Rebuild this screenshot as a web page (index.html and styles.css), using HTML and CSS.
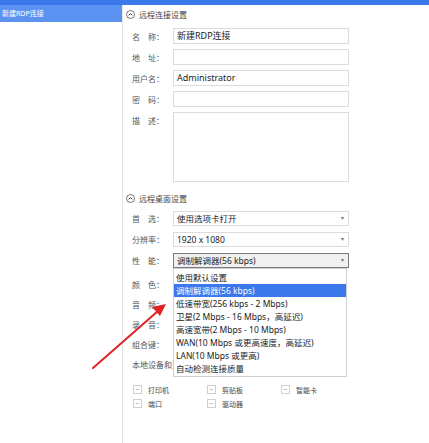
FILE: index.html
```html
<!DOCTYPE html>
<html lang="zh-CN">
<head>
    <meta charset="UTF-8">
    <title>新建RDP连接</title>
    <link rel="stylesheet" href="styles.css">
</head>
<body>
    <div class="topbar"></div>
    <div class="layout">
        <div class="sidebar">
            <div class="side-item active">新建RDP连接</div>
        </div>

        <div class="main">
            <div class="section-head">
                <span class="toggle"><svg width="9" height="9" viewBox="0 0 9 9"><circle cx="4.5" cy="4.5" r="4" fill="none" stroke="#555" stroke-width="0.8"/><path d="M2.8 5.3 L4.5 3.5 L6.2 5.3" fill="none" stroke="#444" stroke-width="1"/></svg></span>
                远程连接设置
            </div>
            <div class="rows first">
                <div class="row"><label>名　称：</label><div class="field">新建RDP连接</div></div>
                <div class="row"><label>地　址：</label><div class="field"></div></div>
                <div class="row"><label>用户名：</label><div class="field">Administrator</div></div>
                <div class="row"><label>密　码：</label><div class="field"></div></div>
                <div class="row tall"><label>描　述：</label><div class="field area"></div></div>
            </div>

            <div class="section-head second">
                <span class="toggle"><svg width="9" height="9" viewBox="0 0 9 9"><circle cx="4.5" cy="4.5" r="4" fill="none" stroke="#555" stroke-width="0.8"/><path d="M2.8 5.3 L4.5 3.5 L6.2 5.3" fill="none" stroke="#444" stroke-width="1"/></svg></span>
                远程桌面设置
            </div>
            <div class="rows selects">
                <div class="row"><label>首　选：</label><div class="field select">使用选项卡打开<span class="caret">▾</span></div></div>
                <div class="row"><label>分辨率：</label><div class="field select">1920 x 1080<span class="caret">▾</span></div></div>
                <div class="row"><label>性　能：</label>
                    <div class="field select focused">调制解调器(56 kbps)<span class="caret">▾</span>
                        <ul class="dropdown">
                            <li>使用默认设置</li>
                            <li class="hl">调制解调器(56 kbps)</li>
                            <li>低速带宽(256 kbps - 2 Mbps)</li>
                            <li>卫星(2 Mbps - 16 Mbps，高延迟)</li>
                            <li>高速宽带(2 Mbps - 10 Mbps)</li>
                            <li>WAN(10 Mbps 或更高速度，高延迟)</li>
                            <li>LAN(10 Mbps 或更高)</li>
                            <li>自动检测连接质量</li>
                        </ul>
                    </div>
                </div>
            </div>
            <div class="rows hidden-rows">
                <div class="row"><label>颜　色：</label></div>
                <div class="row"><label>音　频：</label></div>
                <div class="row"><label>录　音：</label></div>
                <div class="row"><label>组合键：</label></div>
                <div class="row"><label class="clip">本地设备和资源：</label></div>
            </div>
            <div class="checks">
                <div class="check"><span class="box">−</span>打印机</div>
                <div class="check"><span class="box">−</span>剪贴板</div>
                <div class="check"><span class="box">−</span>智能卡</div>
                <div class="check"><span class="box">−</span>端口</div>
                <div class="check"><span class="box">−</span>驱动器</div>
            </div>
        </div>
    </div>

    <svg class="arrow" width="429" height="443" viewBox="0 0 429 443">
        <line x1="93" y1="368" x2="158" y2="311" stroke="#e02424" stroke-width="2" stroke-linecap="round"/>
        <polygon points="166,304 152,307 160,316" fill="#e02424"/>
    </svg>
</body>
</html>
```

FILE: styles.css
```css
/* General */
body {
    margin: 0;
    width: 429px;
    height: 443px;
    overflow: hidden;
    background-color: #ffffff;
    font-family: "Noto Sans", "Noto Sans CJK SC", sans-serif;
    color: #333;
    position: relative;
}

.topbar {
    height: 5px;
    background-color: #3a78ec;
}

.layout {
    display: flex;
    height: 438px;
}

/* Sidebar */
.sidebar {
    width: 122px;
    border-right: 1px solid #e4e4e4;
}

.side-item {
    height: 17px;
    line-height: 17px;
    padding-left: 2px;
    font-size: 7px;
    color: #fff;
}

.side-item.active {
    background-color: #5b93f3;
}

/* Main */
.main {
    flex: 1;
    padding: 2px 0 0 3px;
}

.section-head {
    height: 14px;
    display: flex;
    align-items: center;
    gap: 4px;
    font-size: 8px;
    color: #444;
}

.toggle {
    display: flex;
}

.section-head.second {
    margin-top: 9px;
}

.rows {
    padding-left: 6px;
}

.rows.first {
    margin-top: 7px;
}

.row {
    display: flex;
    align-items: center;
    height: 16px;
    margin-bottom: 5px;
}

.row.tall {
    height: 70px;
    align-items: flex-start;
}

.row label {
    width: 41px;
    font-size: 8px;
    color: #555;
    white-space: nowrap;
}

.row label.clip {
    overflow: hidden;
}

.row.tall label {
    padding-top: 3px;
}

.field {
    width: 171px;
    height: 14px;
    border: 1px solid #dcdcdc;
    font-size: 9px;
    line-height: 14px;
    padding-left: 3px;
    color: #222;
}

.field.area {
    height: 68px;
}

/* Selects */
.rows.selects {
    margin-top: 6px;
}

.rows.selects .row {
    height: 15px;
    margin-bottom: 6px;
}

.field.select {
    height: 13px;
    line-height: 13px;
    font-size: 8.5px;
    position: relative;
}

.caret {
    position: absolute;
    right: 4px;
    top: 0;
    font-size: 6px;
    color: #777;
}

.field.focused {
    border-color: #7a7a7a;
    background-color: #f0f0f0;
}

.dropdown {
    position: absolute;
    left: -1px;
    top: 14px;
    width: 172px;
    margin: 0;
    padding: 2px 0 1px;
    list-style: none;
    background-color: #fff;
    border: 1px solid #cfcfcf;
    z-index: 2;
}

.dropdown li {
    height: 13px;
    line-height: 13px;
    padding-left: 2px;
    font-size: 8.5px;
    color: #222;
    white-space: nowrap;
}

.dropdown li.hl {
    background-color: #3a78ec;
    color: #fff;
}

/* Rows under the open dropdown */
.rows.hidden-rows .row {
    height: 20px;
    margin-bottom: 0;
}

/* Checkboxes */
.checks {
    display: grid;
    grid-template-columns: 74px 74px 74px;
    row-gap: 5px;
    padding-left: 7px;
    margin-top: 11px;
}

.check {
    display: flex;
    align-items: center;
    gap: 6px;
    font-size: 7px;
    color: #444;
    height: 9px;
}

.box {
    width: 7px;
    height: 7px;
    border: 1px solid #cfcfcf;
    font-size: 7px;
    line-height: 7px;
    text-align: center;
    color: #888;
}

/* Annotation arrow */
.arrow {
    position: absolute;
    left: 0;
    top: 0;
    z-index: 5;
    pointer-events: none;
}
```
